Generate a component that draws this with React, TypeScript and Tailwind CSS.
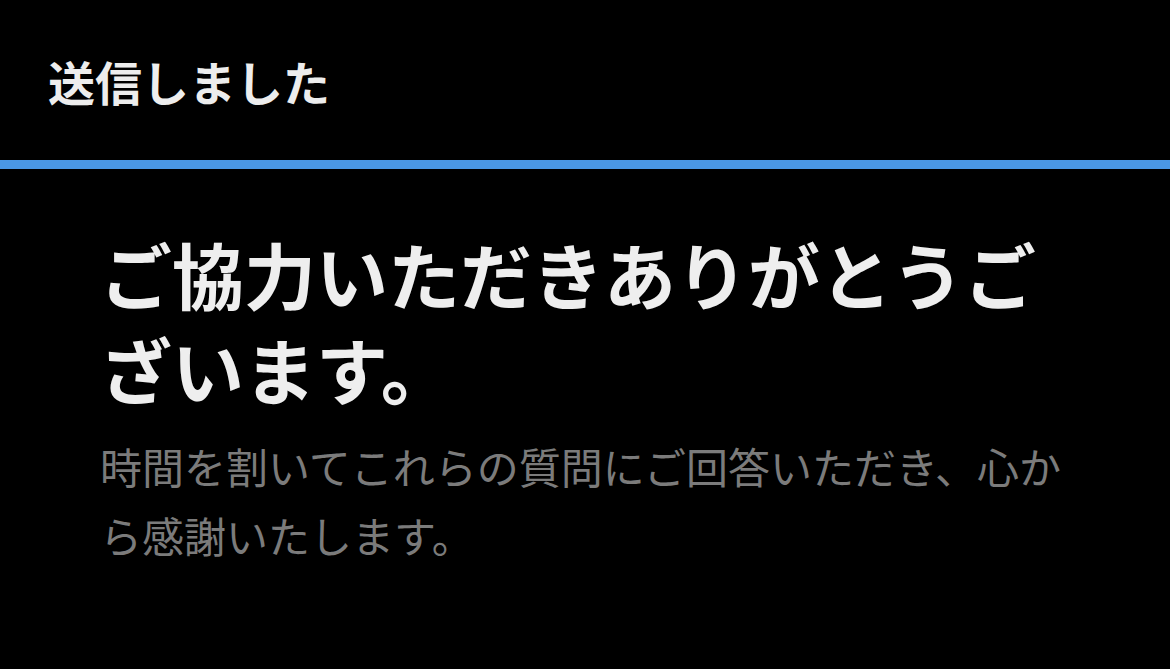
import React from 'react';

const font = { fontFamily: '"Noto Sans CJK JP", "Noto Sans", sans-serif' };

const App = () => {
    return (
        <div className="min-h-[669px] w-full bg-black" style={font}>
            <header className="flex h-[160px] items-center px-[48px]">
                <h1 className="text-[47px] font-semibold leading-none text-[#ededed]">送信しました</h1>
            </header>
            <div className="h-[9px] w-full bg-[#4a97e4]"></div>
            <main className="pl-[100px] pr-[80px] pt-[56px]">
                <h2 className="text-[72px] font-bold leading-[95px] text-[#eeeeee]">
                    ご協力いただきありがとうございます。
                </h2>
                <p className="mt-[16px] text-[42px] leading-[69px] text-[#7b7b7b]">
                    時間を割いてこれらの質問にご回答いただき、心から感謝いたします。
                </p>
            </main>
        </div>
    );
};

export default App;
